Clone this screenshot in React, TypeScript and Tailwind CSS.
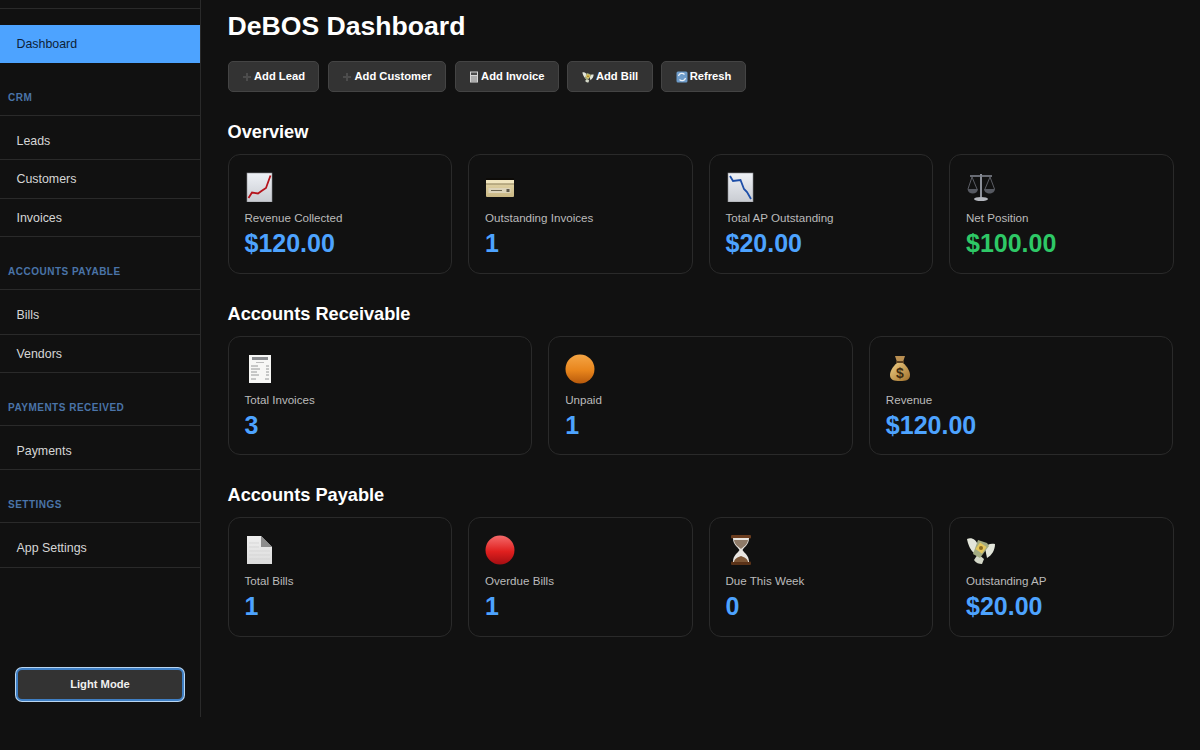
import type { ReactNode } from 'react';

const FONT = 'font-["Liberation_Sans",Arial,sans-serif]';

// --- emoji-like icons, drawn by hand because no emoji font is installed ---

function ChartUp() {
    return (
        <svg width="30" height="30" viewBox="0 0 30 30">
            <defs>
                <linearGradient id="chartA" x1="0" y1="0" x2="0" y2="1">
                    <stop offset="0" stopColor="#eef1f6" />
                    <stop offset="1" stopColor="#c9ccd2" />
                </linearGradient>
            </defs>
            <rect x="2" y="1" width="25" height="29" fill="url(#chartA)" stroke="#8b8d92" strokeWidth="0.6" />
            <path d="M3.5 26 L7 20.5 L13 21.5 L16.5 19 L21 16 L25.5 3.5" fill="none" stroke="#b5141c" strokeWidth="1.8" />
        </svg>
    );
}

function ChartDown() {
    return (
        <svg width="30" height="30" viewBox="0 0 30 30">
            <defs>
                <linearGradient id="chartB" x1="0" y1="0" x2="0" y2="1">
                    <stop offset="0" stopColor="#eef1f6" />
                    <stop offset="1" stopColor="#c9ccd2" />
                </linearGradient>
            </defs>
            <rect x="2" y="1" width="25" height="29" fill="url(#chartB)" stroke="#8b8d92" strokeWidth="0.6" />
            <path d="M4 4 L7 9 L14.5 8 L18 17 L21 20 L25 27" fill="none" stroke="#1d4ea8" strokeWidth="1.8" />
        </svg>
    );
}

function CreditCard() {
    return (
        <svg width="30" height="30" viewBox="0 0 30 30">
            <defs>
                <linearGradient id="cardA" x1="0" y1="0" x2="0" y2="1">
                    <stop offset="0" stopColor="#e8dcb0" />
                    <stop offset="1" stopColor="#c9b784" />
                </linearGradient>
            </defs>
            <rect x="1" y="6" width="28" height="19" rx="1" fill="url(#cardA)" />
            <rect x="1" y="6" width="28" height="2" fill="#0d0b08" />
            <rect x="1" y="8" width="28" height="3.500" fill="#f1e6bf" />
            <rect x="1" y="11.500" width="28" height="1" fill="#8f8360" />
            <rect x="3.500" y="16" width="22" height="5" fill="#ddd4ba" />
            <path d="M6 18.500h11" stroke="#6d6650" strokeWidth="1" />
            <rect x="21.500" y="17" width="3" height="3" fill="#5e5848" />
        </svg>
    );
}

function Scales() {
    return (
        <svg width="30" height="30" viewBox="0 0 30 30" fill="none">
            <path d="M15 2v23" stroke="#8d919a" strokeWidth="2" />
            <path d="M4 4h22" stroke="#7f838c" strokeWidth="1.600" />
            <path d="M6 5 L2 17 M6 5 L11 17 M24 5 L19 17 M24 5 L28.500 17" stroke="#6d7079" strokeWidth="0.800" />
            <path d="M1.500 17h10.500c-.5 6-10 6-10.500 0z" fill="#565961" />
            <path d="M18 17h11c-.5 6-10.500 6-11 0z" fill="#565961" />
            <ellipse cx="15" cy="27" rx="7" ry="2" fill="#b4b7be" />
        </svg>
    );
}

function Receipt() {
    return (
        <svg width="30" height="30" viewBox="0 0 30 30">
            <rect x="4" y="1" width="22" height="28" fill="#f7f7f5" />
            <rect x="7" y="3" width="16" height="3" fill="#8a8c8f" />
            <path d="M11 8.500h8" stroke="#bbb" strokeWidth="1" />
            <path d="M6 12h7M21 12h3M6 15h9M21 15h3M6 18h6M21 18h3M6 21h8M21 21h3M6 25h5M20 25h4" stroke="#8a8c8f" strokeWidth="0.900" />
        </svg>
    );
}

function Ball({ id, light, mid, dark }: { id: string; light: string; mid: string; dark: string }) {
    return (
        <svg width="30" height="30" viewBox="0 0 30 30">
            <defs>
                <linearGradient id={id} x1="0" y1="0" x2="0" y2="1">
                    <stop offset="0" stopColor={light} />
                    <stop offset="0.55" stopColor={mid} />
                    <stop offset="1" stopColor={dark} />
                </linearGradient>
            </defs>
            <circle cx="15" cy="15" r="14.500" fill={`url(#${id})`} />
        </svg>
    );
}

function MoneyBag() {
    return (
        <svg width="30" height="30" viewBox="0 0 30 30">
            <defs>
                <linearGradient id="bagA" x1="0" y1="0" x2="1" y2="1">
                    <stop offset="0" stopColor="#f0cf86" />
                    <stop offset="1" stopColor="#a0702a" />
                </linearGradient>
            </defs>
            <path d="M9 2h10l-2 6h-6z" fill="#b98f52" />
            <rect x="10" y="7" width="8" height="2" fill="#5e4322" />
            <path d="M11 9h6c5 4 7 9 7 12 0 5-4 6-10 6s-10-1-10-6c0-3 2-8 7-12z" fill="url(#bagA)" />
            <text x="14" y="24" textAnchor="middle" fontSize="14" fontWeight="700" fill="#3d2a10" fontFamily="Liberation Sans">$</text>
        </svg>
    );
}

function Doc() {
    return (
        <svg width="30" height="30" viewBox="0 0 30 30">
            <defs>
                <linearGradient id="docA" x1="0" y1="0" x2="0" y2="1">
                    <stop offset="0" stopColor="#efefef" />
                    <stop offset="1" stopColor="#dcdcdc" />
                </linearGradient>
            </defs>
            <path d="M2 1h14l11 11v17H2z" fill="url(#docA)" />
            <path d="M16 1l11 11H16z" fill="#8d8d8d" />
            <path d="M4 8h10M4 12h10M4 16h21M4 20h21M4 24h21" stroke="#d0d0d0" strokeWidth="0.700" />
        </svg>
    );
}

function Hourglass() {
    return (
        <svg width="30" height="30" viewBox="0 0 30 30">
            <rect x="5" y="0" width="20" height="3.500" rx="1" fill="#6b3d1f" />
            <rect x="5" y="26.500" width="20" height="3.500" rx="1" fill="#5a3218" />
            <path d="M7 3h16c0 7-5 9-6.500 12 1.500 3 6.500 5 6.500 12H7c0-7 5-9 6.500-12C12 12 7 10 7 3z" fill="#e8e6e2" />
            <path d="M8 5h14c-.5 5-5 7-7 9-2-2-6.500-4-7-9z" fill="#8e7a68" />
            <path d="M8 27c0-3 4-5 7-6 3 1 7 3 7 6z" fill="#7d5636" />
        </svg>
    );
}

function MoneyWings({ size = 30 }: { size?: number }) {
    return (
        <svg width={size} height={size} viewBox="0 0 30 30">
            <path d="M1 4c5-2 9 1 11 6l-4 8C4 15 2 9 1 4z" fill="#e3e6da" />
            <path d="M29 9c-4-1-8 0-10 4l2 10c5-3 8-8 8-14z" fill="#e3e6da" />
            <path d="M8 25l4-6 6 5-2 5c-3 0-6-1-8-4z" fill="#d4d8c8" />
            <path d="M12 5l9 3 2 3-9 12-7-4z" fill="#a3ab82" />
            <rect x="11" y="9" width="8" height="8" transform="rotate(35 15 13)" fill="#e4c75c" />
            <circle cx="15" cy="13" r="2" fill="#8a6a20" />
        </svg>
    );
}

function Plus() {
    return (
        <svg width="10" height="10" viewBox="0 0 10 10" className="shrink-0">
            <path d="M5 1v8M1 5h8" stroke="#4c4c4c" strokeWidth="2" />
        </svg>
    );
}

function Abacus() {
    return (
        <svg width="10" height="12" viewBox="0 0 10 12" className="shrink-0">
            <rect x="1" y="0.500" width="8" height="11" fill="#d5d5d5" />
            <rect x="2" y="1.500" width="6" height="2.500" fill="#4a4a4a" />
            <path d="M2 6h6M2 8h6M2 10h6" stroke="#777" strokeWidth="0.900" />
        </svg>
    );
}

function RefreshIcon() {
    return (
        <svg width="12" height="12" viewBox="0 0 12 12" className="shrink-0">
            <rect x="0.500" y="0.500" width="11" height="11" rx="1.500" fill="#6d9bc9" />
            <path d="M2.500 5a3.500 3.500 0 0 1 6-1.500M9.500 7a3.500 3.500 0 0 1-6 1.500" fill="none" stroke="#eef3f8" strokeWidth="1.200" />
        </svg>
    );
}

// --- page pieces ---

function NavItem({ label, active }: { label: string; active?: boolean }) {
    if (active) {
        return (
            <div className="flex h-[38px] items-center bg-[#4da3ff] pl-[16.500px] text-[12.400px] text-[#0d1f38]">
                {label}
            </div>
        );
    }
    return (
        <div className="flex h-[38.500px] items-center border-b border-[#2a2a2a] pt-[1px] pl-[16.500px] text-[12.400px] text-[#d6d6d6]">
            {label}
        </div>
    );
}

function NavSection({ title, items }: { title: string; items: string[] }) {
    return (
        <div className="mt-[25.800px]">
            <div className="border-b border-[#2a2a2a] pt-[1px] pb-[9px] pl-[8px] text-[10px] leading-[16px] font-bold tracking-[0.5px] text-[#4a74a8] uppercase">
                {title}
            </div>
            <div className="mt-[6px]">
                {items.map((item) => (
                    <NavItem key={item} label={item} />
                ))}
            </div>
        </div>
    );
}

function Sidebar() {
    return (
        <aside className="flex h-[717px] w-[201px] shrink-0 flex-col border-r border-[#2a2a2a]">
            <div className="h-[9px] border-b border-[#2a2a2a]" />
            <div className="mt-[16px]">
                <NavItem label="Dashboard" active />
            </div>
            <NavSection title="CRM" items={['Leads', 'Customers', 'Invoices']} />
            <NavSection title="Accounts Payable" items={['Bills', 'Vendors']} />
            <NavSection title="Payments Received" items={['Payments']} />
            <NavSection title="Settings" items={['App Settings']} />
            <div className="mt-auto px-[16px] pb-[16px]">
                <button className="h-[33px] w-full rounded-[6px] border-2 border-[#3f7fc4] bg-[#333333] text-[11.200px] font-bold text-[#f0f0f0] shadow-[0_0_0_1px_#b9d6f2]">
                    Light Mode
                </button>
            </div>
        </aside>
    );
}

function ActionButton({ icon, label }: { icon: ReactNode; label: string }) {
    return (
        <button className="flex h-[31px] items-center gap-[2px] rounded-[5px] border border-[#444444] bg-[#333333] px-[13.500px] text-[11.200px] font-bold text-white">
            {icon}
            <span>{label}</span>
        </button>
    );
}

function StatCard({
    icon,
    label,
    value,
    green,
}: {
    icon: ReactNode;
    label: string;
    value: string;
    green?: boolean;
}) {
    return (
        <div className="h-[119.500px] rounded-[12px] border border-[#2a2a2a] bg-[#111111] px-[16px] pt-[17px]">
            <div className="h-[31px]">{icon}</div>
            <div className="mt-[7px] text-[11.600px] leading-[16px] text-[#bbbbbb]">{label}</div>
            <div className={`mt-[2px] text-[25px] leading-[30px] font-bold ${green ? 'text-[#2ec866]' : 'text-[#4da3ff]'}`}>
                {value}
            </div>
        </div>
    );
}

function SectionTitle({ children }: { children: ReactNode }) {
    return <h2 className="mt-[28px] mb-[10px] text-[18.200px] leading-[24px] font-bold text-white">{children}</h2>;
}

export default function App() {
    return (
        <div className={`flex h-[750px] w-[1200px] overflow-hidden bg-[#111111] ${FONT}`}>
            <Sidebar />
            <main className="flex-1 px-[26.500px]">
                <h1 className="mt-[9px] text-[26.600px] leading-[34px] font-bold text-white">DeBOS Dashboard</h1>
                {/* quick actions */}
                <div className="mt-[18px] flex gap-[8.500px]">
                    <ActionButton icon={<Plus />} label="Add Lead" />
                    <ActionButton icon={<Plus />} label="Add Customer" />
                    <ActionButton icon={<Abacus />} label="Add Invoice" />
                    <ActionButton icon={<MoneyWings size={12} />} label="Add Bill" />
                    <ActionButton icon={<RefreshIcon />} label="Refresh" />
                </div>

                <SectionTitle>Overview</SectionTitle>
                <div className="grid grid-cols-4 gap-[16px]">
                    <StatCard icon={<ChartUp />} label="Revenue Collected" value="$120.00" />
                    <StatCard icon={<CreditCard />} label="Outstanding Invoices" value="1" />
                    <StatCard icon={<ChartDown />} label="Total AP Outstanding" value="$20.00" />
                    <StatCard icon={<Scales />} label="Net Position" value="$100.00" green />
                </div>

                <SectionTitle>Accounts Receivable</SectionTitle>
                <div className="grid grid-cols-3 gap-[16px]">
                    <StatCard icon={<Receipt />} label="Total Invoices" value="3" />
                    <StatCard
                        icon={<Ball id="orangeBall" light="#f5a545" mid="#e8851c" dark="#b85a0c" />}
                        label="Unpaid"
                        value="1"
                    />
                    <StatCard icon={<MoneyBag />} label="Revenue" value="$120.00" />
                </div>

                <SectionTitle>Accounts Payable</SectionTitle>
                <div className="grid grid-cols-4 gap-[16px]">
                    <StatCard icon={<Doc />} label="Total Bills" value="1" />
                    <StatCard
                        icon={<Ball id="redBall" light="#f56a6a" mid="#e0201f" dark="#a50e12" />}
                        label="Overdue Bills"
                        value="1"
                    />
                    <StatCard icon={<Hourglass />} label="Due This Week" value="0" />
                    <StatCard icon={<MoneyWings />} label="Outstanding AP" value="$20.00" />
                </div>
            </main>
        </div>
    );
}
